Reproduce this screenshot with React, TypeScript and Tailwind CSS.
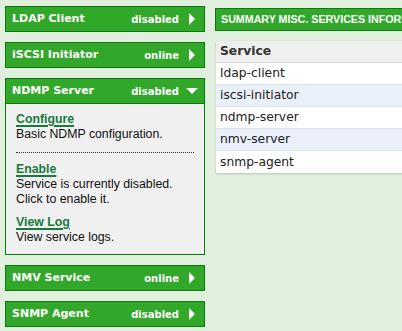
import React from "react";

type Svc = { name: string; status: string; open?: boolean };

const services: Svc[] = [
  { name: "LDAP Client", status: "disabled" },
  { name: "iSCSI Initiator", status: "online" },
  { name: "NDMP Server", status: "disabled", open: true },
  { name: "NMV Service", status: "online" },
  { name: "SNMP Agent", status: "disabled" },
];

const rows = ["ldap-client", "iscsi-initiator", "ndmp-server", "nmv-server", "snmp-agent"];

function Arrow({ open }: { open?: boolean }) {
  return (
    <span className="w-[12px] h-[12px] flex items-center justify-center">
      {open ? (
        <svg width="12" height="6" viewBox="0 0 12 6">
          <path d="M0 0H12L6 6Z" fill="#fff" />
        </svg>
      ) : (
        <svg width="6" height="12" viewBox="0 0 6 12">
          <path d="M0 0L6 6L0 12Z" fill="#fff" />
        </svg>
      )}
    </span>
  );
}

function Header({ svc }: { svc: Svc }) {
  return (
    <div className="h-[24px] flex items-center justify-between pl-[6px] pr-[6px] bg-[#32a82a] text-white font-['DejaVu_Sans',sans-serif] font-bold">
      <span className="text-[11px]">{svc.name}</span>
      <span className="flex items-center gap-[7px]">
        <span className="text-[10px]">{svc.status}</span>
        <Arrow open={svc.open} />
      </span>
    </div>
  );
}

function Action({ title, children }: { title: string; children: React.ReactNode }) {
  return (
    <div>
      <a className="font-bold text-[#167a3c] underline decoration-2 underline-offset-[2px] leading-[15px] block w-fit">
        {title}
      </a>
      <p className="leading-[15px] text-[#111]">{children}</p>
    </div>
  );
}

export default function App() {
  return (
    <div className="w-[402px] h-[331px] overflow-hidden bg-[#e1efdf] flex">
      {/* Left accordion */}
      <div className="w-[200px] ml-[5px] pt-[6px] flex flex-col gap-[10px] shrink-0">
        {services.map((svc) => (
          <div key={svc.name} className="border border-[#0b7b0b]">
            <Header svc={svc} />
            {svc.open && (
              <div className="border-t border-[#0b7b0b] bg-[#f0f0f0] px-[10px] pt-[8px] pb-[9px] text-[12.3px] font-['Liberation_Sans',Arial,sans-serif]">
                <Action title="Configure">Basic NDMP configuration.</Action>
                <div className="border-t border-dotted border-[#333] mt-[10px] mb-[9px]" />
                <Action title="Enable">
                  Service is currently disabled.
                  <br />
                  Click to enable it.
                </Action>
                <div className="mt-[8px]">
                  <Action title="View Log">View service logs.</Action>
                </div>
              </div>
            )}
          </div>
        ))}
      </div>

      {/* Right summary */}
      <div className="ml-[10px] pt-[8px] w-[400px] shrink-0">
        <div className="h-[23px] flex items-center px-[5px] bg-[#32a82a] border border-[#0b7b0b] text-white font-bold text-[10.7px] font-['Liberation_Sans',Arial,sans-serif] whitespace-nowrap">
          SUMMARY MISC. SERVICES INFORMATION
        </div>
        <div className="mt-[10px] ml-px bg-white shadow-[0_1px_2px_rgba(0,0,0,0.18)] font-['DejaVu_Sans',sans-serif] text-[12.3px] text-[#222]">
          <div className="h-[22px] flex items-center px-[4px] bg-[#efefef] border-b border-[#dcdcdc] font-bold text-[#333]">
            Service
          </div>
          {rows.map((r, i) => (
            <div
              key={r}
              className={`h-[22px] flex items-center px-[4px] border-b border-[#dde3ea] last:border-b-0 ${i % 2 === 1 ? "bg-[#eaf0fa]" : "bg-white"}`}
            >
              {r}
            </div>
          ))}
        </div>
      </div>
    </div>
  );
}
